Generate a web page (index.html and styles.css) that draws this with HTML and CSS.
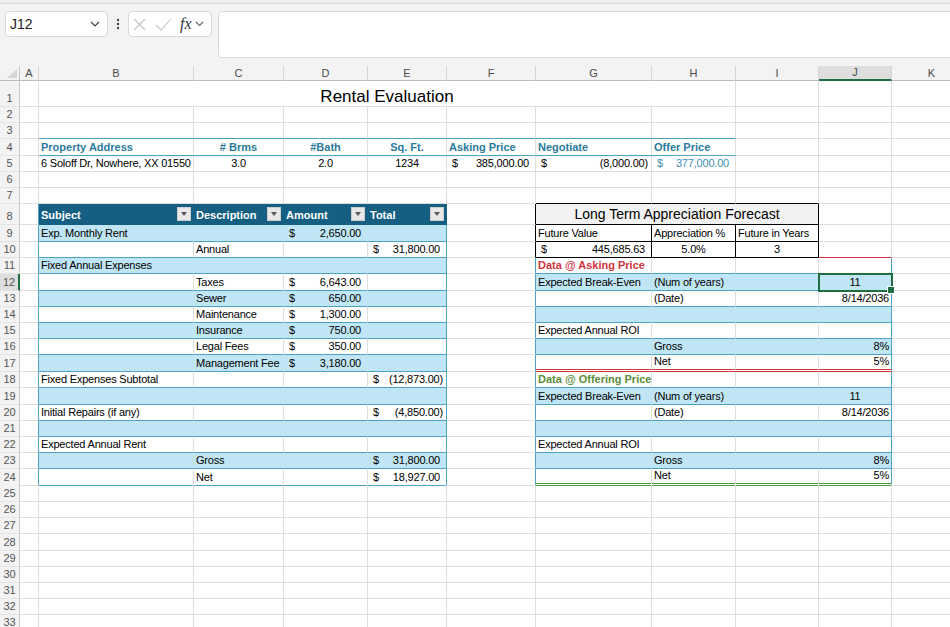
FILE: index.html
```html
<!DOCTYPE html>
<html lang="en">
<head>
    <meta charset="UTF-8">
    <title>Rental Evaluation</title>
    <link rel="stylesheet" href="styles.css">
</head>
<body>
    <!-- name box + formula bar -->
    <div class="toolbar">
        <div class="namebox">
            <span>J12</span>
            <svg width="10" height="6" viewBox="0 0 10 6"><path d="M1 1l4 4 4-4" fill="none" stroke="#444" stroke-width="1.2"/></svg>
        </div>
        <div class="more">
            <svg width="4" height="14" viewBox="0 0 4 14"><circle cx="2" cy="3" r="1.2" fill="#444"/><circle cx="2" cy="7" r="1.2" fill="#444"/><circle cx="2" cy="11" r="1.2" fill="#444"/></svg>
        </div>
        <div class="fxbox">
            <svg width="13" height="13" viewBox="0 0 13 13"><path d="M1 1l11 11M12 1L1 12" stroke="#c4c4c4" stroke-width="1.1"/></svg>
            <svg class="ok" width="17" height="13" viewBox="0 0 17 13"><path d="M1 7l5 5L16 1" fill="none" stroke="#c4c4c4" stroke-width="1.1"/></svg>
            <span class="fx">fx</span>
            <svg class="drop" width="9" height="6" viewBox="0 0 9 6"><path d="M1 1l3.5 3.5L8 1" fill="none" stroke="#666" stroke-width="1.1"/></svg>
        </div>
        <div class="formula"></div>
    </div>

    <!-- sheet -->
    <div class="sheet">
        <div class="row colhead">
            <div class="corner"><svg width="10" height="9" viewBox="0 0 10 9"><path d="M10 0V9H0Z" fill="#d6d6d6"/></svg></div>
            <div>A</div><div>B</div><div>C</div><div>D</div><div>E</div><div>F</div><div>G</div><div>H</div><div>I</div><div class="on">J</div><div>K</div>
        </div>

        <div class="row r1"><div class="rh">1</div><div></div><div class="title">Rental Evaluation</div><div></div><div></div><div></div></div>
        <div class="row"><div class="rh">2</div><div></div><div></div><div></div><div></div><div></div><div></div><div></div><div></div><div></div><div></div><div></div></div>
        <div class="row"><div class="rh">3</div><div></div><div class="hb"></div><div class="hb"></div><div class="hb"></div><div class="hb"></div><div class="hb"></div><div class="hb"></div><div class="hb"></div><div></div><div></div><div></div></div>
        <div class="row t">
            <div class="rh">4</div><div></div>
            <div class="hd hb">Property Address</div>
            <div class="hd hb ctr"># Brms</div>
            <div class="hd hb ctr">#Bath</div>
            <div class="hd hb ctr">Sq. Ft.</div>
            <div class="hd hb">Asking Price</div>
            <div class="hd hb">Negotiate</div>
            <div class="hd hb">Offer Price</div>
            <div></div><div></div><div></div>
        </div>
        <div class="row">
            <div class="rh">5</div><div></div>
            <div>6 Soloff Dr, Nowhere, XX 01550</div>
            <div class="ctr">3.0</div>
            <div class="ctr">2.0</div>
            <div class="ctr">1234</div>
            <div class="acc"><span>$</span>385,000.00</div>
            <div class="acc neg"><span>$</span>(8,000.00)</div>
            <div class="acc tv"><span>$</span>377,000.00</div>
            <div></div><div></div><div></div>
        </div>
        <div class="row"><div class="rh">6</div><div></div><div></div><div></div><div></div><div></div><div></div><div></div><div></div><div></div><div></div><div></div></div>
        <div class="row"><div class="rh">7</div><div></div><div></div><div></div><div></div><div></div><div></div><div class="kb"></div><div class="kb"></div><div class="kb"></div><div></div><div></div></div>

        <div class="row r8">
            <div class="rh">8</div><div class="tl"></div>
            <div class="th">Subject<span class="flt"></span></div>
            <div class="th">Description<span class="flt"></span></div>
            <div class="th">Amount<span class="flt"></span></div>
            <div class="th">Total<span class="flt"></span></div>
            <div class="kr"></div>
            <div class="fc">Long Term Appreciation Forecast</div>
            <div></div><div></div>
        </div>
        <div class="row t">
            <div class="rh">9</div><div class="tl"></div>
            <div class="b">Exp. Monthly Rent</div><div class="b"></div>
            <div class="b acc"><span>$</span>2,650.00</div><div class="b tr"></div>
            <div class="kr"></div>
            <div class="kx">Future Value</div><div class="kx">Appreciation %</div><div class="kx">Future in Years</div>
            <div></div><div></div>
        </div>
        <div class="row">
            <div class="rh">10</div><div class="tl"></div>
            <div class="w"></div><div class="w">Annual</div><div class="w"></div>
            <div class="w tr acc"><span>$</span>31,800.00</div>
            <div class="kr"></div>
            <div class="kx acc"><span>$</span>445,685.63</div><div class="kx ctr">5.0%</div><div class="kx ctr">3</div>
            <div class="rb"></div><div></div>
        </div>
        <div class="row">
            <div class="rh">11</div><div class="tl"></div>
            <div class="b">Fixed Annual Expenses</div><div class="b"></div><div class="b"></div><div class="b tr"></div>
            <div class="tl"></div>
            <div class="w red">Data @ Asking Price</div><div class="w"></div><div class="w"></div><div class="w tr"></div>
            <div></div>
        </div>
        <div class="row t">
            <div class="rh on">12</div><div class="tl"></div>
            <div class="w"></div><div class="w">Taxes</div>
            <div class="w acc"><span>$</span>6,643.00</div><div class="w tr"></div>
            <div class="tl"></div>
            <div class="b">Expected Break-Even</div><div class="b">(Num of years)</div><div class="b"></div><div class="b tr ctr sel">11</div>
            <div></div>
        </div>
        <div class="row">
            <div class="rh">13</div><div class="tl"></div>
            <div class="b"></div><div class="b">Sewer</div>
            <div class="b acc"><span>$</span>650.00</div><div class="b tr"></div>
            <div class="tl"></div>
            <div class="w"></div><div class="w">(Date)</div><div class="w"></div><div class="w tr rt">8/14/2036</div>
            <div></div>
        </div>
        <div class="row">
            <div class="rh">14</div><div class="tl"></div>
            <div class="w"></div><div class="w">Maintenance</div>
            <div class="w acc"><span>$</span>1,300.00</div><div class="w tr"></div>
            <div class="tl"></div>
            <div class="b"></div><div class="b"></div><div class="b"></div><div class="b tr"></div>
            <div></div>
        </div>
        <div class="row">
            <div class="rh">15</div><div class="tl"></div>
            <div class="b"></div><div class="b">Insurance</div>
            <div class="b acc"><span>$</span>750.00</div><div class="b tr"></div>
            <div class="tl"></div>
            <div class="w">Expected Annual ROI</div><div class="w"></div><div class="w"></div><div class="w tr"></div>
            <div></div>
        </div>
        <div class="row">
            <div class="rh">16</div><div class="tl"></div>
            <div class="w"></div><div class="w">Legal Fees</div>
            <div class="w acc"><span>$</span>350.00</div><div class="w tr"></div>
            <div class="tl"></div>
            <div class="b"></div><div class="b">Gross</div><div class="b"></div><div class="b tr rt">8%</div>
            <div></div>
        </div>
        <div class="row t">
            <div class="rh">17</div><div class="tl"></div>
            <div class="b"></div><div class="b">Management Fee</div>
            <div class="b acc"><span>$</span>3,180.00</div><div class="b tr"></div>
            <div class="tl"></div>
            <div class="w dr"></div><div class="w dr">Net</div><div class="w dr"></div><div class="w tr dr rt">5%</div>
            <div></div>
        </div>
        <div class="row">
            <div class="rh">18</div><div class="tl"></div>
            <div class="w">Fixed Expenses Subtotal</div><div class="w"></div><div class="w"></div>
            <div class="w tr acc neg"><span>$</span>(12,873.00)</div>
            <div class="tl"></div>
            <div class="w grn">Data @ Offering Price</div><div class="w"></div><div class="w"></div><div class="w tr"></div>
            <div></div>
        </div>
        <div class="row t">
            <div class="rh">19</div><div class="tl"></div>
            <div class="b"></div><div class="b"></div><div class="b"></div><div class="b tr"></div>
            <div class="tl"></div>
            <div class="b">Expected Break-Even</div><div class="b">(Num of years)</div><div class="b"></div><div class="b tr ctr">11</div>
            <div></div>
        </div>
        <div class="row">
            <div class="rh">20</div><div class="tl"></div>
            <div class="w">Initial Repairs (if any)</div><div class="w"></div><div class="w"></div>
            <div class="w tr acc neg"><span>$</span>(4,850.00)</div>
            <div class="tl"></div>
            <div class="w"></div><div class="w">(Date)</div><div class="w"></div><div class="w tr rt">8/14/2036</div>
            <div></div>
        </div>
        <div class="row">
            <div class="rh">21</div><div class="tl"></div>
            <div class="b"></div><div class="b"></div><div class="b"></div><div class="b tr"></div>
            <div class="tl"></div>
            <div class="b"></div><div class="b"></div><div class="b"></div><div class="b tr"></div>
            <div></div>
        </div>
        <div class="row">
            <div class="rh">22</div><div class="tl"></div>
            <div class="w">Expected Annual Rent</div><div class="w"></div><div class="w"></div><div class="w tr"></div>
            <div class="tl"></div>
            <div class="w">Expected Annual ROI</div><div class="w"></div><div class="w"></div><div class="w tr"></div>
            <div></div>
        </div>
        <div class="row">
            <div class="rh">23</div><div class="tl"></div>
            <div class="b"></div><div class="b">Gross</div><div class="b"></div>
            <div class="b tr acc"><span>$</span>31,800.00</div>
            <div class="tl"></div>
            <div class="b"></div><div class="b">Gross</div><div class="b"></div><div class="b tr rt">8%</div>
            <div></div>
        </div>
        <div class="row">
            <div class="rh">24</div><div class="tl"></div>
            <div class="w"></div><div class="w">Net</div><div class="w"></div>
            <div class="w tr acc"><span>$</span>18,927.00</div>
            <div class="tl"></div>
            <div class="w dg"></div><div class="w dg">Net</div><div class="w dg"></div><div class="w tr dg rt">5%</div>
            <div></div>
        </div>

        <div class="row t"><div class="rh">25</div><div></div><div></div><div></div><div></div><div></div><div></div><div></div><div></div><div></div><div></div><div></div></div>
        <div class="row"><div class="rh">26</div><div></div><div></div><div></div><div></div><div></div><div></div><div></div><div></div><div></div><div></div><div></div></div>
        <div class="row"><div class="rh">27</div><div></div><div></div><div></div><div></div><div></div><div></div><div></div><div></div><div></div><div></div><div></div></div>
        <div class="row t"><div class="rh">28</div><div></div><div></div><div></div><div></div><div></div><div></div><div></div><div></div><div></div><div></div><div></div></div>
        <div class="row"><div class="rh">29</div><div></div><div></div><div></div><div></div><div></div><div></div><div></div><div></div><div></div><div></div><div></div></div>
        <div class="row"><div class="rh">30</div><div></div><div></div><div></div><div></div><div></div><div></div><div></div><div></div><div></div><div></div><div></div></div>
        <div class="row"><div class="rh">31</div><div></div><div></div><div></div><div></div><div></div><div></div><div></div><div></div><div></div><div></div><div></div></div>
        <div class="row"><div class="rh">32</div><div></div><div></div><div></div><div></div><div></div><div></div><div></div><div></div><div></div><div></div><div></div></div>
        <div class="row"><div class="rh">33</div><div></div><div></div><div></div><div></div><div></div><div></div><div></div><div></div><div></div><div></div><div></div></div>
    </div>
</body>
</html>
```

FILE: styles.css
```css
*{
    margin: 0;
    padding: 0;
    box-sizing: border-box;
}
body{
    width: 950px;
    height: 627px;
    overflow: hidden;
    background-color: #fff;
    font-family: "Liberation Sans", Arial, sans-serif;
    font-size: 11px;
    color: #000;
}

/* formula bar */
.toolbar{
    display: flex;
    align-items: flex-start;
    height: 66px;
    padding: 8px 0 0 5px;
    background-color: #f3f3f3;
    border-top: 3px solid #ededed;
    box-shadow: inset 0 1px 0 #dcdcdc;
}
.namebox{
    display: flex;
    align-items: center;
    justify-content: space-between;
    width: 103px;
    height: 26px;
    padding: 0 7px 0 4px;
    background-color: #fff;
    border: 1px solid #d9d9d9;
    border-radius: 4px;
    font-size: 14px;
    color: #222;
}
.more{
    display: flex;
    align-items: center;
    justify-content: center;
    width: 20px;
    height: 26px;
}
.fxbox{
    display: flex;
    align-items: center;
    width: 84px;
    height: 26px;
    padding-left: 4px;
    background-color: #fff;
    border: 1px solid #d9d9d9;
    border-radius: 4px;
}
.fxbox .ok{
    margin-left: 9px;
}
.fx{
    margin-left: 8px;
    font-family: "Liberation Serif", serif;
    font-style: italic;
    font-size: 16px;
    color: #333;
}
.fxbox .drop{
    margin-left: 3px;
}
.formula{
    flex: 1;
    height: 47px;
    margin: 0 -10px 0 6px;
    background-color: #fff;
    border: 1px solid #d9d9d9;
    border-radius: 4px;
}

/* grid */
.sheet{
    width: 950px;
    overflow: hidden;
}
.row{
    display: grid;
    grid-template-columns: 20px 19px 155px 90px 84px 79px 89px 116px 84px 83px 73px 80px;
    height: 16px;
}
.row>*{
    display: flex;
    align-items: flex-end;
    min-width: 0;
    padding: 0 2px 1px;
    line-height: 13px;
    white-space: nowrap;
    letter-spacing: -0.2px;
    border-right: 1px solid #dedede;
    border-bottom: 1px solid #dedede;
}
.t{
    height: 17px;
}
.r1{
    height: 26px;
}
.r8{
    height: 21px;
}

/* column + row headings */
.colhead{
    height: 15px;
}
.colhead>*{
    align-items: center;
    justify-content: center;
    padding: 0;
    letter-spacing: 0;
    background-color: #f3f3f3;
    color: #4a4a4a;
    border-right-color: #d6d6d6;
    border-bottom-color: #bdbdbd;
}
.colhead .corner{
    justify-content: flex-end;
    align-items: flex-end;
    padding: 0 2px 2px 0;
    border-right-color: #c8c8c8;
}
.colhead .on{
    background-color: #dedede;
    border-bottom: 2px solid #1e6e42;
}
.rh{
    justify-content: center;
    padding: 0 0 1px;
    letter-spacing: 0;
    background-color: #f3f3f3;
    color: #555;
    border-right-color: #c8c8c8;
    border-bottom-color: #e4e4e4;
}
.rh.on{
    background-color: #dedede;
    border-right: 2px solid #1e6e42;
}

/* cell content */
.title{
    grid-column: span 7;
    justify-content: center;
    padding-bottom: 0;
    font-size: 17px;
    line-height: 19px;
    letter-spacing: 0;
}
.ctr{
    justify-content: center;
}
.rt{
    justify-content: flex-end;
}
.acc{
    justify-content: space-between;
    padding: 0 6px 1px 5px;
}
.acc.neg{
    padding-right: 3px;
}
.hd{
    font-weight: bold;
    letter-spacing: 0;
    color: #2b7a9b;
}
.hb{
    border-bottom-color: #4ea3c4;
}
.tv{
    color: #3f8fb1;
}

/* expense table */
.th{
    justify-content: space-between;
    padding-bottom: 2px;
    font-weight: bold;
    letter-spacing: 0;
    color: #fff;
    background-color: #156082;
    border-right-color: #156082;
    border-bottom-color: #156082;
}
.flt{
    display: flex;
    align-items: center;
    justify-content: center;
    align-self: center;
    width: 14px;
    height: 14px;
    margin-bottom: -2px;
    background-color: #e8e8e8;
    border: 1px solid #cdcdcd;
}
.flt::after{
    content: '';
    border-left: 3.5px solid transparent;
    border-right: 3.5px solid transparent;
    border-top: 4px solid #5a5a5a;
}
.b{
    background-color: #c0e6f5;
    border-right-color: #c0e6f5;
    border-bottom-color: #4ea3c4;
}
.w{
    border-bottom-color: #4ea3c4;
}
.tl,.tr{
    border-right-color: #4ea3c4;
}

/* forecast box */
.kr{
    border-right-color: #000;
}
.kb{
    border-bottom-color: #000;
}
.kx{
    border-right-color: #000;
    border-bottom-color: #000;
}
.fc{
    grid-column: span 3;
    justify-content: center;
    padding-bottom: 1px;
    font-size: 14px;
    line-height: 17px;
    letter-spacing: 0;
    background-color: #f2f2f2;
    border-right-color: #000;
    border-bottom-color: #000;
}
.rb{
    border-bottom-color: #d0343c;
}
.dr{
    border-bottom: 3px double #d0343c;
}
.dg{
    border-bottom: 3px double #4e9a3a;
}
.red{
    font-weight: bold;
    letter-spacing: 0;
    color: #d0343c;
}
.grn{
    font-weight: bold;
    letter-spacing: 0;
    color: #5b8e3a;
}

/* active cell */
.sel{
    position: relative;
    z-index: 1;
    outline: 2px solid #1e6e42;
    outline-offset: -1px;
}
.sel::after{
    content: '';
    position: absolute;
    right: -4px;
    bottom: -4px;
    width: 6px;
    height: 6px;
    background-color: #1e6e42;
    border: 1px solid #fff;
}
```
